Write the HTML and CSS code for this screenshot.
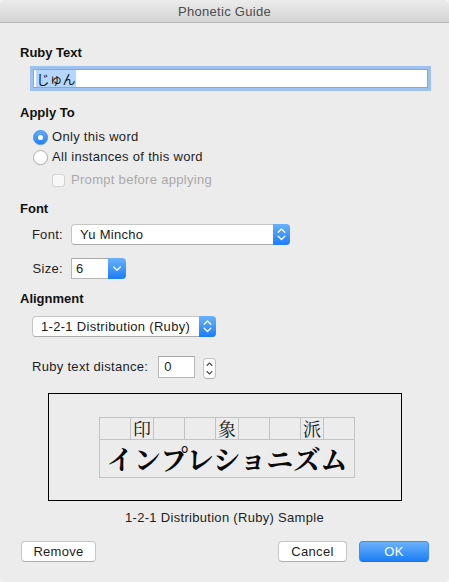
FILE: index.html
```html
<!DOCTYPE html>
<html lang="en">
<head>
<meta charset="utf-8">
<title>Phonetic Guide</title>
<link rel="stylesheet" href="styles.css">
</head>
<body>
<div class="window">
  <div class="titlebar">Phonetic Guide</div>
  <div class="content">
    <div class="heading h-ruby">Ruby Text</div>
    <div class="textfield"><span class="sel">じゅん</span></div>

    <div class="heading h-apply">Apply To</div>
    <div class="radio-row first"><span class="radio on"></span><span>Only this word</span></div>
    <div class="radio-row"><span class="radio"></span><span>All instances of this word</span></div>
    <div class="check-row"><span class="checkbox"></span><span>Prompt before applying</span></div>

    <div class="heading h-font">Font</div>
    <div class="form-row r-font">
      <span class="lbl">Font:</span>
      <div class="popup w-font">
        <span class="value">Yu Mincho</span>
        <span class="cap"><svg width="17" height="21" viewBox="0 0 17 21"><path d="M5.2 8.2 L8.5 5 L11.8 8.2 M5.2 12.3 L8.5 15.5 L11.8 12.3" fill="none" stroke="#fff" stroke-width="1.3" stroke-linecap="round" stroke-linejoin="round"/></svg></span>
      </div>
    </div>
    <div class="form-row r-size">
      <span class="lbl">Size:</span>
      <div class="combo">
        <span class="field">6</span>
        <span class="cap"><svg width="18" height="21" viewBox="0 0 18 21"><path d="M5.7 9 L9 12.2 L12.3 9" fill="none" stroke="#fff" stroke-width="1.3" stroke-linecap="round" stroke-linejoin="round"/></svg></span>
      </div>
    </div>

    <div class="heading h-align">Alignment</div>
    <div class="popup w-align">
      <span class="value">1-2-1 Distribution (Ruby)</span>
      <span class="cap"><svg width="17" height="21" viewBox="0 0 17 21"><path d="M5.2 8.2 L8.5 5 L11.8 8.2 M5.2 12.3 L8.5 15.5 L11.8 12.3" fill="none" stroke="#fff" stroke-width="1.3" stroke-linecap="round" stroke-linejoin="round"/></svg></span>
    </div>

    <div class="distance-row">
      <span class="dlbl">Ruby text distance:</span>
      <span class="numfield">0</span>
      <span class="stepper"><svg width="11" height="19" viewBox="0 0 11 19"><path d="M3 6.5 L5.5 4 L8 6.5 M3 12.5 L5.5 15 L8 12.5" fill="none" stroke="#4a4a4a" stroke-width="1.1" stroke-linecap="round" stroke-linejoin="round"/></svg></span>
    </div>

    <div class="preview">
      <div class="sample">
        <div></div><div class="k">印</div><div></div>
        <div></div><div class="k">象</div><div></div>
        <div></div><div class="k">派</div><div></div>
        <div class="base">インプレショニズム</div>
      </div>
    </div>

    <div class="caption">1-2-1 Distribution (Ruby) Sample</div>

    <div class="buttons">
      <span class="btn b-remove">Remove</span>
      <span class="spacer"></span>
      <span class="btn b-cancel">Cancel</span>
      <span class="btn b-ok">OK</span>
    </div>
  </div>
</div>
</body>
</html>
```

FILE: styles.css
```css
html, body {
  margin: 0;
  padding: 0;
}
body {
  background: #f3f3f3;
  font-family: "Liberation Sans", Arial, sans-serif;
  font-size: 13px;
  color: #1e1e1e;
}
.window {
  width: 449px;
  height: 582px;
  background: #ececec;
  border-radius: 5px;
  overflow: hidden;
}
.titlebar {
  height: 22px;
  line-height: 23px;
  text-align: center;
  color: #4b4b4b;
  letter-spacing: 0.3px;
  background: linear-gradient(#ececec, #d4d4d4);
  border-bottom: 1px solid #b4b4b4;
  border-radius: 5px 5px 0 0;
}
.content {
  padding: 0 20px;
  letter-spacing: 0.3px;
  line-height: 16px;
}
.heading {
  font-weight: bold;
  letter-spacing: 0;
  line-height: 16px;
  color: #111;
}
.h-ruby { margin-top: 21.5px; }
.h-apply { margin-top: 16.5px; }
.h-font { margin-top: 10.5px; }
.h-align { margin-top: 12px; }

.textfield {
  margin: 8.5px 0 0 13px;
  width: 395px;
  height: 19px;
  box-sizing: border-box;
  background: #fff;
  border: 1px solid #7fa8e6;
  box-shadow: 0 0 0 3px #9dc2f1;
  padding-left: 2px;
  letter-spacing: 0;
}
.sel {
  display: inline-block;
  vertical-align: top;
  height: 17px;
  line-height: 17px;
  padding: 0 0.5px;
  background: #b3d7ff;
  font-family: "Noto Sans CJK JP", sans-serif;
  font-size: 13px;
  color: #111;
}

.radio-row {
  display: flex;
  align-items: center;
  height: 20px;
}
.radio-row.first { margin-top: 6.5px; }
.radio {
  width: 15px;
  height: 15px;
  box-sizing: border-box;
  border-radius: 50%;
  border: 1px solid #b1b1b1;
  background: #fff;
  margin: 0 4px 0 13px;
  box-shadow: 0 0.5px 0.5px rgba(0,0,0,0.08);
  display: flex;
  align-items: center;
  justify-content: center;
}
.radio.on {
  border-color: #3a8cf3;
  background: linear-gradient(#64acfa, #2481f6);
}
.radio.on::after {
  content: "";
  width: 5px;
  height: 5px;
  border-radius: 50%;
  background: #fff;
}
.check-row {
  display: flex;
  align-items: center;
  height: 20px;
  margin-top: 3px;
  color: #a9a9a9;
}
.checkbox {
  width: 13px;
  height: 13px;
  box-sizing: border-box;
  border: 1px solid #d2d2d2;
  border-radius: 3px;
  background: #f8f8f8;
  margin: 0 6px 0 32px;
}

.form-row {
  display: flex;
  align-items: center;
  height: 21px;
}
.r-font { margin-top: 7.5px; }
.r-size { margin-top: 13px; }
.lbl {
  width: 43px;
  text-align: right;
  margin-right: 8px;
}
.popup {
  display: flex;
  height: 21px;
  box-sizing: border-box;
  border: 1px solid #c5c5c5;
  border-bottom-color: #acacac;
  border-radius: 4px;
  background: #fff;
}
.popup .value {
  flex: 1;
  line-height: 19px;
  padding-left: 8px;
  color: #1a1a1a;
}
.w-font { width: 219px; }
.w-font .value { padding-left: 8px; }
.w-align {
  width: 184px;
  margin: 9px 0 0 12px;
}
.cap {
  display: block;
  width: 17px;
  height: 21px;
  margin: -1px -1px -1px 0;
  border-radius: 0 4px 4px 0;
  background: linear-gradient(#6ab1fb, #1a7ef7);
}
.cap svg { display: block; }
.combo {
  display: flex;
  height: 21px;
}
.combo .field {
  width: 37px;
  height: 21px;
  box-sizing: border-box;
  border: 1px solid #b7b7b7;
  border-top-color: #a8a8a8;
  border-right: none;
  background: #fff;
  line-height: 19px;
  padding-left: 4px;
}
.combo .cap {
  width: 18px;
  margin: 0;
}

.distance-row {
  display: flex;
  align-items: flex-start;
  margin: 19px 0 0 12px;
  height: 22px;
}
.dlbl {
  line-height: 22px;
  margin-right: 10px;
}
.numfield {
  width: 37px;
  height: 22px;
  box-sizing: border-box;
  border: 1px solid #b8b8b8;
  border-top-color: #a6a6a6;
  background: #fff;
  line-height: 20px;
  padding-left: 5px;
}
.stepper {
  width: 13px;
  height: 21px;
  box-sizing: border-box;
  margin: 2px 0 0 8px;
  border: 1px solid #c2c2c2;
  border-bottom-color: #aeaeae;
  border-radius: 4px;
  background: #fff;
}
.stepper svg { display: block; }

.preview {
  margin: 15px 0 0 28px;
  width: 354px;
  height: 108px;
  box-sizing: border-box;
  border: 1px solid #000;
  padding: 23px 0 0 50px;
}
.sample {
  display: grid;
  grid-template-columns: 30px 22px 30px 30px 22px 30px 30px 22px 30px;
  grid-template-rows: 21px 37px;
  gap: 1px;
  padding: 1px;
  width: max-content;
  background: #c3c3c3;
  letter-spacing: 0;
}
.sample > div {
  background: #ececec;
}
.k {
  font-family: "Noto Serif CJK JP", "Noto Sans CJK JP", serif;
  font-size: 18px;
  line-height: 21px;
  text-align: center;
  color: #111;
}
.base {
  grid-column: 1 / -1;
  font-family: "Noto Serif CJK JP", "Noto Sans CJK JP", serif;
  font-weight: bold;
  font-size: 27px;
  line-height: 37px;
  text-align: center;
  color: #0a0a0a;
}

.caption {
  margin-top: 9px;
  text-align: center;
  color: #1e1e1e;
}

.buttons {
  display: flex;
  margin-top: 15px;
}
.spacer { flex: 1; }
.btn {
  height: 21px;
  box-sizing: border-box;
  border: 1px solid #c6c6c6;
  border-bottom-color: #adadad;
  border-radius: 4px;
  background: #fff;
  text-align: center;
  line-height: 19px;
  color: #1e1e1e;
}
.b-remove { width: 75px; margin-left: 1px; }
.b-cancel { width: 69px; }
.b-ok {
  width: 70px;
  margin-left: 12px;
  border-color: #3c8df3;
  border-bottom-color: #1f73e6;
  background: linear-gradient(#6cb2fb, #1b7ff7);
  color: #fff;
}
```
